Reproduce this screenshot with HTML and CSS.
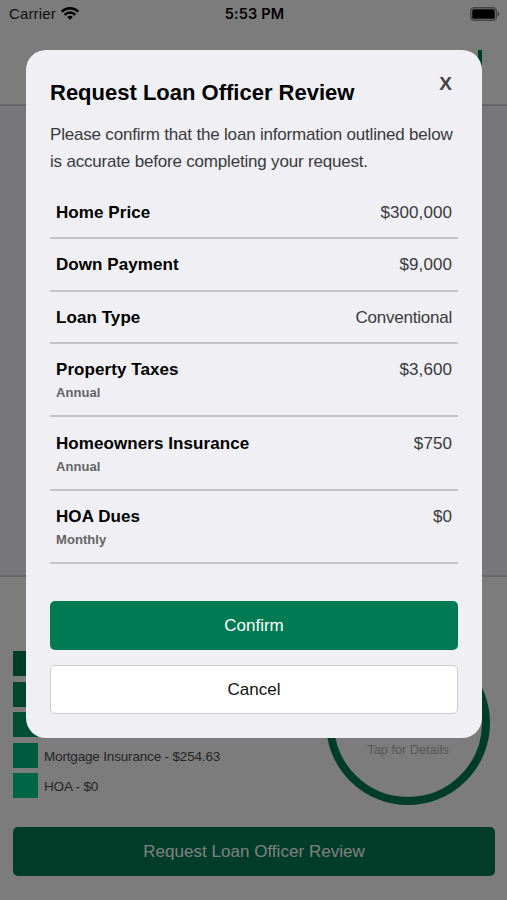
FILE: index.html
```html
<!DOCTYPE html>
<html lang="en">
<head>
    <meta charset="UTF-8">
    <meta name="viewport" content="width=device-width, initial-scale=1.0">
    <title>Request Loan Officer Review</title>
    <link rel="stylesheet" href="styles.css">
</head>
<body>

<div class="page">
    <header class="header">
        <div class="status-bar">
            <div class="carrier">
                <span>Carrier</span>
                <svg class="wifi" viewBox="0 0 18 13" width="18" height="13">
                    <path d="M0.8 4.7a11.6 11.6 0 0 1 16.4 0M3.7 7.8a7.4 7.4 0 0 1 10.6 0" fill="none" stroke="#000" stroke-width="2.4"/>
                    <path d="M9 12.8L6.2 10a4 4 0 0 1 5.6 0z"/>
                </svg>
            </div>
            <span class="time">5:53 PM</span>
            <svg class="battery" viewBox="0 0 30 14" width="30" height="14">
                <rect x="0.8" y="0.8" width="25.6" height="12.4" rx="3.4" fill="none" stroke="#000" stroke-opacity="0.45" stroke-width="1.5"/>
                <rect x="2.2" y="2.2" width="22.6" height="9.6" rx="1.6"/>
                <path d="M27.6 4.6c2.4.8 2.4 4 0 4.8z" fill-opacity="0.45"/>
            </svg>
        </div>
        <div class="nav"><span class="nav-mark"></span></div>
    </header>

    <main class="content"></main>

    <section class="summary">
        <div class="breakdown">
            <ul class="legend">
                <li><span class="swatch swatch-1"></span></li>
                <li><span class="swatch swatch-2"></span></li>
                <li><span class="swatch swatch-3"></span></li>
                <li><span class="swatch swatch-4"></span><span class="legend-label">Mortgage Insurance - $254.63</span></li>
                <li><span class="swatch swatch-5"></span><span class="legend-label">HOA - $0</span></li>
            </ul>
            <div class="chart">Tap for Details</div>
        </div>
        <button class="btn btn-primary btn-request">Request Loan Officer Review</button>
    </section>
</div>

<div class="overlay">
    <div class="modal">
        <div class="modal-header">
            <h1>Request Loan Officer Review</h1>
            <button class="close">X</button>
        </div>
        <p class="intro">Please confirm that the loan information outlined below is accurate before completing your request.</p>

        <dl class="details">
            <div class="row">
                <dt>Home Price</dt>
                <dd>$300,000</dd>
            </div>
            <div class="row">
                <dt>Down Payment</dt>
                <dd>$9,000</dd>
            </div>
            <div class="row">
                <dt>Loan Type</dt>
                <dd class="tight">Conventional</dd>
            </div>
            <div class="row row-tall">
                <dt>Property Taxes<small>Annual</small></dt>
                <dd>$3,600</dd>
            </div>
            <div class="row row-tall">
                <dt>Homeowners Insurance<small>Annual</small></dt>
                <dd>$750</dd>
            </div>
            <div class="row row-tall">
                <dt>HOA Dues<small>Monthly</small></dt>
                <dd>$0</dd>
            </div>
        </dl>

        <div class="actions">
            <button class="btn btn-primary">Confirm</button>
            <button class="btn btn-secondary">Cancel</button>
        </div>
    </div>
</div>

</body>
</html>
```
FILE: styles.css
```css
* {
    box-sizing: border-box;
}

body {
    margin: 0;
    font-family: "Liberation Sans", Arial, sans-serif;
    color: #000;
}

button {
    font-family: inherit;
    border: 0;
    padding: 0;
}

/* Page behind the modal */
.page {
    display: flex;
    flex-direction: column;
    height: 900px;
    overflow: hidden;
}

.header {
    height: 106px;
    background-color: #f9f9f9;
    border-bottom: 2px solid #cfcfd1;
}

.status-bar {
    display: grid;
    grid-template-columns: 1fr auto 1fr;
    align-items: center;
    height: 27px;
    padding: 0 7px 0 9px;
}

.carrier {
    display: flex;
    align-items: center;
    gap: 5px;
    font-size: 15px;
    letter-spacing: 0.15px;
    color: #222;
}

.time {
    font-family: Inter, sans-serif;
    font-size: 14.5px;
    font-weight: 600;
    letter-spacing: 0.15px;
}

.battery {
    justify-self: end;
}

.nav {
    display: flex;
    justify-content: flex-end;
    padding: 23px 25px 0 0;
}

.nav-mark {
    width: 4px;
    height: 26px;
    background-color: #007a53;
}

.content {
    flex: 1;
    background-color: #efeff4;
}

.summary {
    height: 325px;
    padding: 65px 12px 0 13px;
    background-color: #f9f9f9;
    border-top: 2px solid #cfcfd1;
}

.breakdown {
    display: flex;
    justify-content: space-between;
    height: 185px;
    padding-right: 5px;
}

.legend {
    display: flex;
    flex-direction: column;
    gap: 5px;
    margin: 0;
    padding: 9px 0 0;
    list-style: none;
}

.legend li {
    display: flex;
    align-items: center;
    gap: 6px;
    height: 25.5px;
    font-size: 13.5px;
    letter-spacing: -0.17px;
    color: #4c4c4c;
}

.legend-label {
    padding-top: 2px;
}

.swatch {
    width: 25px;
    height: 25px;
}

.swatch-1 {
    background-color: #007a53;
}

.swatch-2 {
    background-color: #008c5f;
}

.swatch-3 {
    background-color: #009e6b;
}

.swatch-4 {
    background-color: #00b57b;
}

.swatch-5 {
    background-color: #00ca89;
}

.chart {
    width: 164px;
    height: 164px;
    margin-top: -1px;
    padding-top: 93px;
    border: 8px solid #007a53;
    border-radius: 50%;
    font-size: 13px;
    letter-spacing: -0.12px;
    text-align: center;
    color: #b0b0b0;
}

/* Buttons */
.btn {
    width: 100%;
    height: 49px;
    padding-top: 1px;
    border-radius: 5px;
    font-size: 17px;
}

.btn-primary {
    background-color: #007a53;
    color: #fff;
}

.btn-secondary {
    background-color: #fff;
    border: 1px solid #ccccd0;
    color: #111;
}

.btn-request {
    letter-spacing: 0.03px;
}

/* Modal */
.overlay {
    position: absolute;
    top: 0;
    left: 0;
    width: 100%;
    height: 900px;
    padding: 50px 25px 0 25.5px;
    background-color: rgba(0, 0, 0, 0.5);
}

.modal {
    height: 688px;
    padding: 24px 24px 0 24.5px;
    background-color: #efeff4;
    border-radius: 20px;
}

.modal-header {
    display: flex;
    justify-content: space-between;
    height: 47px;
    padding-right: 6px;
}

h1 {
    margin: 6px 0 0;
    font-size: 22px;
    line-height: 26px;
}

.close {
    height: 20px;
    background: none;
    font-size: 19px;
    font-weight: bold;
    line-height: 20px;
    color: #444;
}

.intro {
    margin: 0;
    font-size: 17px;
    line-height: 27px;
    letter-spacing: -0.19px;
    color: #3a3a3c;
}

.details {
    margin: 11.6px 0 0;
}

.row {
    display: flex;
    justify-content: space-between;
    height: 52.5px;
    padding: 16.4px 6px 0;
    border-bottom: 2px solid #c3c3c8;
    font-size: 17px;
    line-height: 20px;
}

.row-tall {
    height: 73.3px;
}

dt {
    font-weight: bold;
    letter-spacing: 0.07px;
}

dt small {
    display: block;
    margin-top: 5px;
    font-size: 13px;
    line-height: 16px;
    color: #636366;
}

dd {
    margin: 0;
    letter-spacing: 0.08px;
    color: #3a3a3c;
}

.tight {
    letter-spacing: -0.22px;
}

.actions {
    display: flex;
    flex-direction: column;
    gap: 15px;
    padding-top: 36.6px;
}
```
